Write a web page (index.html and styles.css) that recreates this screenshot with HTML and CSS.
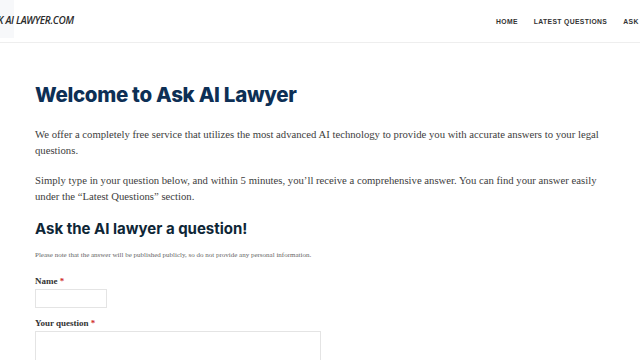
FILE: index.html
```html
<!DOCTYPE html>
<html lang="en">
<head>
    <meta charset="UTF-8">
    <meta name="viewport" content="width=device-width, initial-scale=1.0">
    <title>Ask AI Lawyer</title>
    <link rel="stylesheet" href="styles.css">
</head>
<body>
    <header class="site-header">
        <div class="brand">
            <span class="brand-mark"></span>
            <a class="brand-name" href="#">ASK AI LAWYER.COM</a>
        </div>
        <nav class="main-nav">
            <a href="#">Home</a>
            <a href="#">Latest Questions</a>
            <a href="#">Ask a Question</a>
        </nav>
    </header>

    <main class="content">
        <h1>Welcome to Ask AI Lawyer</h1>
        <p>We offer a completely free service that utilizes the most advanced AI technology to provide you with accurate answers to your legal questions.</p>
        <p>Simply type in your question below, and within 5 minutes, you’ll receive a comprehensive answer. You can find your answer easily under the “Latest Questions” section.</p>

        <h2>Ask the AI lawyer a question!</h2>
        <p class="note">Please note that the answer will be published publicly, so do not provide any personal information.</p>

        <form class="ask-form">
            <div class="field">
                <label for="name">Name <span class="req">*</span></label>
                <input type="text" id="name" class="input-name">
            </div>
            <div class="field">
                <label for="question">Your question <span class="req">*</span></label>
                <textarea id="question" rows="6"></textarea>
            </div>
        </form>
    </main>
</body>
</html>
```

FILE: styles.css
```css
* {
    box-sizing: border-box;
    margin: 0;
    padding: 0;
}

body {
    font-family: "Liberation Serif", serif;
    color: #3a3a3a;
    background: #fff;
    overflow: hidden;
}

.site-header {
    display: flex;
    align-items: center;
    height: 43px;
    border-bottom: 1px solid #eeeeee;
    white-space: nowrap;
    overflow: hidden;
}

.brand {
    flex: 0 0 510px;
    margin-left: -14px;
    display: flex;
    align-items: center;
    height: 100%;
}

.brand-mark {
    width: 28px;
    height: 38px;
    align-self: flex-start;
    background: #f7f8fa;
}

.brand-name {
    margin-left: -27px;
    margin-top: -2px;
    font-family: "Open Sans", sans-serif;
    font-style: italic;
    font-weight: 600;
    font-size: 10px;
    color: #2b2b2b;
    text-decoration: none;
    letter-spacing: -0.3px;
}

.main-nav {
    display: flex;
    gap: 16px;
    flex-shrink: 0;
}

.main-nav a {
    font-family: "Liberation Sans", sans-serif;
    font-weight: 700;
    font-size: 6.8px;
    letter-spacing: 0.35px;
    text-transform: uppercase;
    text-decoration: none;
    color: #333;
}

.content {
    padding: 40px 35px 0;
}

h1 {
    font-family: Inter, sans-serif;
    font-weight: 800;
    font-size: 20.5px;
    color: #0d2f55;
    letter-spacing: -0.3px;
    line-height: 1.2;
    margin-bottom: 18px;
}

p {
    font-size: 10.7px;
    line-height: 16px;
    margin-bottom: 14px;
    color: #3d3d3d;
}

h2 {
    font-family: Inter, sans-serif;
    font-weight: 700;
    font-size: 15px;
    color: #0e2636;
    line-height: 1.2;
    margin: 16px 0 12px;
}

.note {
    font-size: 7px;
    line-height: 10px;
    color: #666;
    margin-bottom: 15px;
}

.field {
    margin-bottom: 9px;
}

label {
    display: block;
    font-weight: 700;
    font-size: 9px;
    line-height: 12px;
    color: #333;
    margin-bottom: 2px;
}

.req {
    color: #d02b2b;
}

input,
textarea {
    display: block;
    border: 1px solid #e4e4e4;
    background: #fff;
    font: inherit;
}

.input-name {
    width: 72px;
    height: 19px;
}

textarea {
    width: 286px;
    height: 80px;
    resize: none;
}
```
